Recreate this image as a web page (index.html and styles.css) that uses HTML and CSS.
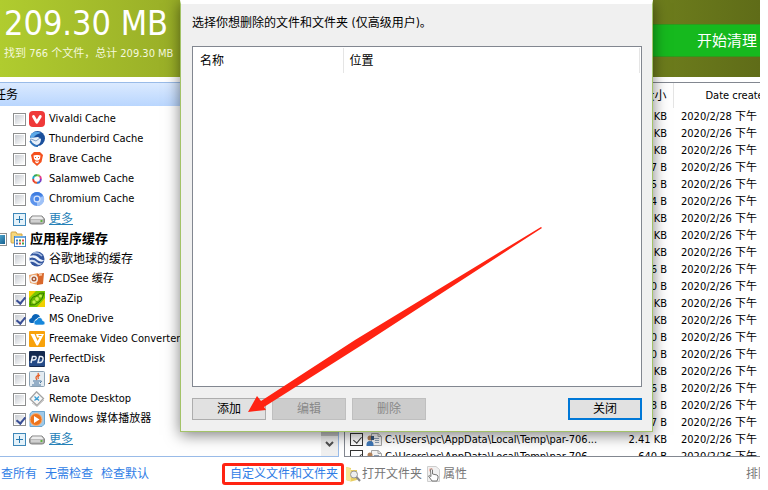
FILE: index.html
```
<!DOCTYPE html>
<html lang="zh-CN">
<head>
  <meta charset="UTF-8">
  <meta name="viewport" content="width=device-width, initial-scale=1.0">
  <title>磁盘清理</title>
  <link rel="stylesheet" href="styles.css">
</head>
<body>
  <div class="app">
    <header class="banner">
      <div>
        <h1>209.30 MB</h1>
        <p>找到 766 个文件，总计 209.30 MB</p>
      </div>
      <button type="button" class="clean-btn">开始清理</button>
    </header>

    <main class="panes">
      <section class="tasks">
        <h2>任务</h2>
        <div class="tasks-body">
          <ul class="tree">
            <li>
              <input type="checkbox" id="t1">
              <svg class="icon" viewBox="0 0 16 16"><rect width="16" height="16" rx="4" fill="#ef3939"/><path d="M4.500 5.500 L7.800 11.200 L11.300 5.500" fill="none" stroke="#fff" stroke-width="2.800" stroke-linecap="round" stroke-linejoin="round"/></svg>
              <label for="t1">Vivaldi Cache</label>
            </li>
            <li>
              <input type="checkbox" id="t2">
              <svg class="icon" viewBox="0 0 16 16"><circle cx="8.500" cy="7.500" r="7.500" fill="#1a4f9c"/><path d="M2 3 Q7 -1 12 2 Q7 3 5 6 L1 8 Z" fill="#5ba8e8"/><path d="M1 7 L9 6 L12 8 Q12 13 8 14 Q3 14 1 7" fill="#e9f1fa"/><path d="M2 8 L7 10 L11 7" fill="none" stroke="#7e9dc4"/><path d="M1 10 Q4 15 9 15.500" fill="none" stroke="#2d74bd" stroke-width="1.500"/></svg>
              <label for="t2">Thunderbird Cache</label>
            </li>
            <li>
              <input type="checkbox" id="t3">
              <svg class="icon" viewBox="0 0 16 16"><path d="M5 1 H11 L14 4 L12.500 11 L8 15 L3.500 11 L2 4 Z" fill="#f4511e"/><path d="M4.500 4.500 L7 4 H9 L11.500 4.500 L11 8 L9 9.500 L10 11 L8 12.500 L6 11 L7 9.500 L5 8 Z" fill="#fff"/><path d="M6 6 L7 7 M10 6 L9 7 M7 10 H9" stroke="#f4511e"/></svg>
              <label for="t3">Brave Cache</label>
            </li>
            <li>
              <input type="checkbox" id="t4">
              <svg class="icon" viewBox="0 0 16 16" fill="none" stroke-width="2"><path d="M5 5 L8 4" stroke="#36a852"/><path d="M8 4 L11 5" stroke="#8bc34a"/><path d="M11 5 L12 8" stroke="#e83e8c"/><path d="M12 8 L11 11" stroke="#7b3fc4"/><path d="M11 11 L8 12" stroke="#2979d8"/><path d="M8 12 L5 11" stroke="#ef5a28"/><path d="M5 11 L4 8" stroke="#e53935"/><path d="M4 8 L5 5" stroke="#22a7c9"/></svg>
              <label for="t4">Salamweb Cache</label>
            </li>
            <li>
              <input type="checkbox" id="t5">
              <svg class="icon" viewBox="0 0 16 16"><circle cx="8" cy="8" r="7" fill="#5b93ec"/><path d="M8 8 L14.500 5 A7 7 0 0 1 8 15 Z" fill="#9fc2f7"/><path d="M2 4.500 A7 7 0 0 1 14 4.500 H8 Z" fill="#3f7de0"/><circle cx="8" cy="8" r="3.500" fill="#d9e6fb"/><circle cx="8" cy="8" r="2.300" fill="#4a86e8"/></svg>
              <label for="t5">Chromium Cache</label>
            </li>
            <li class="more">
              <button type="button" aria-label="展开" class="expand"></button>
              <svg class="icon" viewBox="0 0 16 16"><path d="M3 5 H13 L15.500 8 V11 Q15.500 13 13 13 H3 Q0.500 13 0.500 11 V8 Z" fill="#a5a5a5" stroke="#858585"/><path d="M3.500 5.500 H12.500 L14.500 8 H1.500 Z" fill="#ececec"/><rect x="2" y="8.500" width="12" height="3" fill="#d0d0d0"/><rect x="11.500" y="9" width="2" height="2" fill="#5cb53c"/></svg>
              <a href="#">更多</a>
            </li>
            <li class="group">
              <input type="checkbox" id="g1" class="partial">
              <svg class="icon" viewBox="0 0 16 16"><path d="M1 2 Q1 1 2 1 H6 L7 3 H12 V12 H2 Q1 12 1 11 Z" fill="#f6d77c" stroke="#d2a544"/><rect x="4.500" y="5.500" width="11" height="10" fill="#fff" stroke="#4a86c8"/><rect x="5" y="5" width="10" height="2" fill="#6ba7e0"/><path d="M6 9.500 H8 M6 12.500 H8" stroke="#3e78c7" stroke-width="2"/><path d="M9 9.500 H11 M12 12.500 H14" stroke="#47a447" stroke-width="2"/><path d="M12 9.500 H14 M9 12.500 H11" stroke="#de5140" stroke-width="2"/></svg>
              <label for="g1">应用程序缓存</label>
            </li>
            <li class="zh">
              <input type="checkbox" id="t6">
              <svg class="icon" viewBox="0 0 16 16"><circle cx="8" cy="8" r="7.500" fill="#33569f"/><path d="M1 5 Q6 3 9 6 Q12 10 15.500 9 Q13 12 9 9.500 Q5 5.500 1 7 Z" fill="#f0f5fc"/><path d="M1 9 Q5 8 8 11 Q11 13.500 14 12 Q10 15.500 7 12.500 Q4 10 1 11 Z" fill="#d7e3f4"/><path d="M4 2 Q9 1 13 5" fill="none" stroke="#a9bfe3" stroke-width="1.500"/></svg>
              <label for="t6">谷歌地球的缓存</label>
            </li>
            <li>
              <input type="checkbox" id="t7">
              <svg class="icon" viewBox="0 0 16 16"><path d="M0 4 L9 2 V14 L1 12 Z" fill="#eda46b"/><path d="M8 3 L15 2 L14 13 L8 14 Z" fill="#d9682b"/><circle cx="5" cy="8" r="4" fill="#f5eee8"/><circle cx="5" cy="8" r="2.500" fill="#a75a37"/><circle cx="5" cy="8" r="1" fill="#fff"/><path d="M10 4 L13 3.500" stroke="#f8c49c" stroke-width="2"/></svg>
              <label for="t7">ACDSee 缓存</label>
            </li>
            <li>
              <input type="checkbox" id="t8" checked>
              <svg class="icon" viewBox="0 0 16 16"><rect width="16" height="16" fill="#79c800"/><path d="M0 0 H7 L0 7 Z M16 7 V16 H8 Z" fill="#f0d000"/><path d="M1 14 Q1 6 7 5 Q11 1 15 2 Q14 8 10 11 Q6 15 1 14" fill="#65b800" stroke="#387a00"/><circle cx="5" cy="11" r="1.700" fill="#c7ef51"/><circle cx="8" cy="8" r="1.900" fill="#c7ef51"/><circle cx="11.500" cy="5" r="1.500" fill="#c7ef51"/></svg>
              <label for="t8">PeaZip</label>
            </li>
            <li>
              <input type="checkbox" id="t9" checked>
              <svg class="icon" viewBox="0 0 16 16"><path d="M2 12 Q0 11.500 0 9.500 Q0 7.500 2.500 7 Q3.500 3 7 3 Q10 3 11 5.500 L6 9 V12 Z" fill="#0a64b8"/><path d="M7 14 Q4.500 13.500 5 11 Q5.500 9 7.500 9 Q8.500 6 11 6.500 Q13.500 7 13.500 9.500 Q16 10 16 12 Q16 14 14 14 Z" fill="#1687dc" stroke="#fff" stroke-width="0.600"/></svg>
              <label for="t9">MS OneDrive</label>
            </li>
            <li>
              <input type="checkbox" id="t10">
              <svg class="icon" viewBox="0 0 16 16"><rect width="16" height="16" rx="1" fill="#f8a20b"/><path d="M1.500 3 H5.500 L8.500 10 L10.500 6.500 H8 L7 3 H15 L9 14.500 H7.500 Z" fill="#fff"/><path d="M9.500 4.500 H12.500" stroke="#f8a20b"/></svg>
              <label for="t10">Freemake Video Converter</label>
            </li>
            <li>
              <input type="checkbox" id="t11">
              <svg class="icon" viewBox="0 0 16 16"><rect width="16" height="16" rx="1" fill="#14294f"/><path d="M0 10 Q8 6 16 9 V15 H0 Z" fill="#254b87"/><path d="M2 12 L3.500 5.500 H6 Q7.500 5.500 7 7.500 Q6.500 9 4.500 9 H3 M9 11.500 L10.500 5.500 H12 Q14.500 5.500 14 8.500 Q13.500 11.500 11 11.500 Z" fill="none" stroke="#e8eef7" stroke-width="1.500"/></svg>
              <label for="t11">PerfectDisk</label>
            </li>
            <li>
              <input type="checkbox" id="t12">
              <svg class="icon" viewBox="0 0 16 16"><rect x="0.500" y="0.500" width="15" height="15" rx="1" fill="#e3ebf1" stroke="#8ba1b3"/><path d="M9 2 Q10 4 8 5 Q6 6.500 8 9 M11 4 Q8 5.500 9.500 8" fill="none" stroke="#e7632d" stroke-width="1.300"/><path d="M4 10 H11 M5 12 H10 M3 14 H12 M11 10 Q14 9.500 11 12" fill="none" stroke="#46729c"/></svg>
              <label for="t12">Java</label>
            </li>
            <li>
              <input type="checkbox" id="t13">
              <svg class="icon" viewBox="0 0 16 16"><path d="M7.500 0.800 L14.500 7.500 L8 14.500 L1 8 Z" fill="#f7f7f7" stroke="#a3a3a3" stroke-width="1.300"/><path d="M3 12 L8 15.500 L15 9" fill="none" stroke="#c4c4c4"/><path d="M5.500 5.500 L7.500 7.500 L5.500 9.500 M10 5.500 L8 7.500 L10 9.500" fill="none" stroke="#3d9fd6" stroke-width="1.300"/></svg>
              <label for="t13">Remote Desktop</label>
            </li>
            <li>
              <input type="checkbox" id="t14" checked>
              <svg class="icon" viewBox="0 0 16 16"><path d="M3 0.500 H15.500 V13 L13 15.500 H1 V3 Z" fill="#9fc9e8" stroke="#6ba5cf"/><circle cx="7" cy="8.500" r="6" fill="#ee741c" stroke="#f9b27a"/><path d="M5 5 L10.500 8.500 L5 12 Z" fill="#fff"/></svg>
              <label for="t14">Windows 媒体播放器</label>
            </li>
            <li class="more">
              <button type="button" aria-label="展开" class="expand"></button>
              <svg class="icon" viewBox="0 0 16 16"><path d="M3 5 H13 L15.500 8 V11 Q15.500 13 13 13 H3 Q0.500 13 0.500 11 V8 Z" fill="#a5a5a5" stroke="#858585"/><path d="M3.500 5.500 H12.500 L14.500 8 H1.500 Z" fill="#ececec"/><rect x="2" y="8.500" width="12" height="3" fill="#d0d0d0"/><rect x="11.500" y="9" width="2" height="2" fill="#5cb53c"/></svg>
              <a href="#">更多</a>
            </li>
          </ul>
          <div class="scrollbar">
            <div class="thumb"></div>
            <button type="button" aria-label="向下滚动">
              <svg width="9" height="7" viewBox="0 0 9 7"><path d="M1 1 L4.500 4.500 L8 1" fill="none" stroke="#505050" stroke-width="2"/></svg>
            </button>
          </div>
        </div>
      </section>

      <section class="files">
        <table>
          <thead>
            <tr><th class="name"></th><th class="size">大小</th><th class="date">Date created</th></tr>
          </thead>
          <tbody>
            <tr><td></td><td>KB</td><td>2020/2/28 下午</td></tr>
            <tr><td></td><td>KB</td><td>2020/2/26 下午</td></tr>
            <tr><td></td><td>KB</td><td>2020/2/26 下午</td></tr>
            <tr><td></td><td>7 B</td><td>2020/2/26 下午</td></tr>
            <tr><td></td><td>5 B</td><td>2020/2/26 下午</td></tr>
            <tr><td></td><td>4 B</td><td>2020/2/26 下午</td></tr>
            <tr><td></td><td>KB</td><td>2020/2/26 下午</td></tr>
            <tr><td></td><td>KB</td><td>2020/2/26 下午</td></tr>
            <tr><td></td><td>KB</td><td>2020/2/26 下午</td></tr>
            <tr><td></td><td>6 B</td><td>2020/2/26 下午</td></tr>
            <tr><td></td><td>0 B</td><td>2020/2/26 下午</td></tr>
            <tr><td></td><td>KB</td><td>2020/2/26 下午</td></tr>
            <tr><td></td><td>KB</td><td>2020/2/26 下午</td></tr>
            <tr><td></td><td>0 B</td><td>2020/2/26 下午</td></tr>
            <tr><td></td><td>0 B</td><td>2020/2/26 下午</td></tr>
            <tr><td></td><td>KB</td><td>2020/2/26 下午</td></tr>
            <tr><td></td><td>6 B</td><td>2020/2/26 下午</td></tr>
            <tr><td></td><td>8 B</td><td>2020/2/26 下午</td></tr>
            <tr><td></td><td>7 B</td><td>2020/2/26 下午</td></tr>
            <tr>
              <td>
                <div class="file">
                  <input type="checkbox" id="f1" checked>
                  <svg class="icon" viewBox="0 0 16 16"><path d="M5.500 1.500 H12 L15.500 4.500 V13.500 H5.500 Z" fill="#f4f4f4" stroke="#a5a5a5"/><path d="M12 1.500 V4.500 H15" fill="none" stroke="#a5a5a5"/><path d="M8 6.500 H13 M9 8.500 H13 M9 10.500 H13" stroke="#8a9db3"/><circle cx="4" cy="6" r="2.500" fill="#b08058"/><path d="M0.500 14 Q0 9 4 9 Q8 9 7.500 14 Z" fill="#3f78b8"/><path d="M5 4 H8 V8 H5" fill="#35557c"/></svg>
                  <label for="f1">C:\Users\pc\AppData\Local\Temp\par-706...</label>
                </div>
              </td>
              <td>2.41 KB</td><td>2020/2/26 下午</td>
            </tr>
            <tr>
              <td>
                <div class="file">
                  <input type="checkbox" id="f2" checked>
                  <svg class="icon" viewBox="0 0 16 16"><path d="M5.500 1.500 H12 L15.500 4.500 V13.500 H5.500 Z" fill="#f4f4f4" stroke="#a5a5a5"/><path d="M12 1.500 V4.500 H15" fill="none" stroke="#a5a5a5"/><path d="M8 6.500 H13 M9 8.500 H13 M9 10.500 H13" stroke="#8a9db3"/><circle cx="4" cy="6" r="2.500" fill="#b08058"/><path d="M0.500 14 Q0 9 4 9 Q8 9 7.500 14 Z" fill="#3f78b8"/></svg>
                  <label for="f2">C:\Users\pc\AppData\Local\Temp\par-706...</label>
                </div>
              </td>
              <td>640 B</td><td>2020/2/26 下午</td>
            </tr>
          </tbody>
        </table>
      </section>
    </main>

    <footer class="actions">
      <nav class="task-links">
        <a href="#">查所有</a>
        <a href="#">无需检查</a>
        <a href="#">检查默认</a>
        <a href="#" class="custom">自定义文件和文件夹</a>
      </nav>
      <div class="file-links">
        <button type="button">
          <svg class="icon" viewBox="0 0 16 16"><path d="M1 1 L6 2 V4 H12 V14 L6 15.500 L1 14 Z" fill="#e9cf62"/><path d="M1 1 L6 3 V15.500 L1 14 Z" fill="#f5e594"/><circle cx="9" cy="8.500" r="3.500" fill="#eef0f0" stroke="#999"/><path d="M11.500 11 L15 15" stroke="#888" stroke-width="2"/></svg>
          打开文件夹
        </button>
        <button type="button">
          <svg class="icon" viewBox="0 0 16 16"><path d="M1.500 0.500 H10 L13.500 3.500 V15.500 H1.500 Z" fill="#f1f1f1" stroke="#cecece"/><circle cx="5" cy="4" r="2" fill="#efb3a5"/><path d="M4.500 3.500 Q5.500 2.500 6.500 4 V8 L11 9 Q12.500 9.500 12 12 L11 15 H6 L2.500 10 Q3.500 9 5 10.500 Z" fill="#fff" stroke="#777"/></svg>
          属性
        </button>
        <button type="button" class="exclude">排除</button>
      </div>
    </footer>

    <div class="dialog" role="dialog" aria-labelledby="dialogTitle">
      <p id="dialogTitle">选择你想删除的文件和文件夹 (仅高级用户)。</p>
      <div class="folder-list">
        <table>
          <thead>
            <tr><th class="folder-name">名称</th><th>位置</th></tr>
          </thead>
        </table>
      </div>
      <div class="dialog-buttons">
        <button type="button">添加</button>
        <button type="button" disabled>编辑</button>
        <button type="button" disabled>删除</button>
        <button type="button" class="close">关闭</button>
      </div>
    </div>

    <!-- pointer from the list to the add button -->
    <svg class="arrow" width="294" height="187" viewBox="0 0 294 187"><path d="M293 0 L294 1 L117 116 L16 180 L18 183 L0 185 L9 169 L13 174 L107 113 Z" fill="#ff2312"/></svg>
  </div>
</body>
</html>
```

FILE: styles.css
```
:root {
  --line: #99bbe8;
  --gray-line: #828790;
  --link: #2f7de6;
  --red: #ff2312;
}

* {
  margin: 0;
  padding: 0;
  box-sizing: border-box;
}

body {
  font-family: "DejaVu Sans Condensed", "Noto Sans CJK SC", sans-serif;
  font-size: 11px;
  line-height: 16px;
  color: #000;
  background-color: #fff;
}

button, input {
  font: inherit;
}

a {
  color: var(--link);
  text-decoration: none;
}

.app {
  position: relative;
  display: flex;
  flex-direction: column;
  height: 100vh;
  margin-right: 8px;
  overflow: hidden;
}

.icon {
  flex: none;
  width: 16px;
  height: 16px;
}

/* banner */
.banner {
  display: flex;
  justify-content: space-between;
  height: 77px;
  padding-left: 4px;
  color: #fff;
  background: linear-gradient(to right, #b0cc2f, #98ad27 24%, #6f7f1d 85%, #5f6c18);
}

.banner h1 {
  font-size: 34px;
  font-weight: normal;
  line-height: 46px;
}

.banner p {
  color: #f4f8dc;
}

.clean-btn {
  align-self: flex-start;
  width: 150px;
  height: 33px;
  margin-top: 24px;
  padding-right: 3px;
  border: 1px solid #2f9a1c;
  border-width: 1px 0;
  background-color: #16b91e;
  color: #fff;
  font-size: 15px;
  text-align: right;
}

/* panes */
.panes {
  display: flex;
  flex: 1;
  gap: 5px;
  min-height: 0;
  margin-top: 5px;
}

.tasks {
  display: flex;
  flex: none;
  flex-direction: column;
  width: 339px;
  border: 1px solid var(--line);
  border-left: 0;
}

.tasks h2 {
  height: 23px;
  font-size: 12px;
  font-weight: normal;
  line-height: 25px;
  text-indent: -6px;
  background: linear-gradient(#dbeaff, #b9d6fe);
}

.tasks-body {
  display: flex;
  flex: 1;
  min-height: 0;
}

.tree {
  flex: 1;
  padding: 3px 0 0 13px;
  list-style: none;
}

.tree li {
  display: flex;
  align-items: center;
  gap: 3px;
  height: 20px;
  white-space: nowrap;
}

.tree label, .tree a {
  padding-left: 1px;
}

.tree .zh, .tree a {
  font-size: 12px;
}

.tree a {
  color: #2782b8;
  text-decoration: underline;
}

.tree .group {
  margin-left: -19px;
  font-size: 13px;
  font-weight: bold;
}

input[type="checkbox"] {
  position: relative;
  flex: none;
  width: 13px;
  height: 13px;
  border: 1px solid #8e8f8f;
  background: linear-gradient(135deg, #c8ccd2, #fff) content-box, #fff;
  padding: 1px;
  appearance: none;
}

input[type="checkbox"]:checked::after {
  content: "";
  position: absolute;
  top: 1px;
  left: 4px;
  width: 4px;
  height: 7px;
  border: solid #3a4f96;
  border-width: 0 2px 2px 0;
  transform: rotate(40deg);
}

input[type="checkbox"].partial {
  background: linear-gradient(135deg, #5bb5dc, #17608f) content-box, #fff;
}

.expand {
  flex: none;
  width: 13px;
  height: 13px;
  border: 1px solid #3f87b8;
  background:
    linear-gradient(#2a7ab0, #2a7ab0) center / 7px 1px no-repeat,
    linear-gradient(#2a7ab0, #2a7ab0) center / 1px 7px no-repeat,
    #e4f2fa;
}

.scrollbar {
  display: flex;
  flex-direction: column;
  width: 17px;
  padding-bottom: 2px;
  background-color: #f0f0f0;
}

.scrollbar .thumb {
  flex: 1;
  background-color: #c2c2c2;
}

.scrollbar button {
  height: 18px;
  border: 0;
  background-color: #f0f0f0;
}

/* file list */
.files {
  flex: 1;
  min-width: 0;
  border: 1px solid var(--gray-line);
  border-right: 0;
  overflow: hidden;
}

table {
  width: 100%;
  border-collapse: collapse;
  table-layout: fixed;
}

th {
  font-weight: normal;
  text-align: left;
}

.files th, .files td {
  overflow: hidden;
  white-space: nowrap;
}

.files th {
  height: 25px;
}

.files td {
  height: 17px;
}

.files th.size {
  width: 70px;
  padding-right: 6px;
  border-right: 1px solid #e5e5e5;
  font-size: 12px;
  text-align: right;
}

.files th.date {
  width: 87px;
  padding-left: 32px;
}

.files td:nth-child(2) {
  padding-right: 6px;
  text-align: right;
}

.files td:nth-child(3) {
  padding-left: 8px;
}

.file {
  display: flex;
  align-items: center;
  gap: 3px;
  height: 17px;
  padding-left: 5px;
}

.file input[type="checkbox"] {
  border-color: #333;
  background: #fff;
}

.file input[type="checkbox"]:checked::after {
  border-color: #333;
  border-width: 0 1px 1px 0;
}

/* bottom links */
.actions {
  display: flex;
  gap: 1px;
  height: 33px;
  padding-top: 6px;
  font-size: 12px;
}

.task-links {
  display: flex;
  align-items: flex-start;
  flex: none;
  gap: 8px;
  width: 344px;
  padding-left: 1px;
}

.task-links a {
  line-height: 22px;
}

.task-links .custom {
  margin-left: auto;
  padding: 0 3px 0 5px;
  border: 3px solid var(--red);
  border-radius: 3px;
  line-height: 16px;
}

.file-links {
  display: flex;
  align-items: flex-start;
  flex: 1;
  gap: 4px;
  min-width: 0;
  overflow: hidden;
}

.file-links button {
  display: flex;
  align-items: center;
  flex: none;
  gap: 1px;
  height: 22px;
  border: 0;
  background: none;
  color: #777;
}

.file-links .exclude {
  width: 14px;
  margin-left: auto;
  overflow: hidden;
  white-space: nowrap;
}

/* custom folders dialog */
.dialog {
  position: absolute;
  top: 0;
  right: 107px;
  left: 180px;
  display: flex;
  flex-direction: column;
  height: 432px;
  padding: 11px 10px 11px 11px;
  border: 1px solid #a3c368;
  border-top: 4px solid #fff;
  background-color: #f0f0f0;
  box-shadow: 0 3px 14px rgba(0, 0, 0, 0.5);
  font-size: 12px;
}

.folder-list {
  flex: 1;
  margin-top: 15px;
  padding: 1px;
  border: 1px solid var(--gray-line);
  background-color: #fff;
}

.folder-list th {
  height: 25px;
  padding-left: 6px;
  border-right: 1px solid #e5e5e5;
}

.folder-list .folder-name {
  width: 149px;
}

.dialog-buttons {
  display: flex;
  gap: 6px;
  margin-top: 11px;
}

.dialog-buttons button {
  width: 74px;
  height: 22px;
  border: 1px solid #adadad;
  background-color: #e1e1e1;
  color: #000;
}

.dialog-buttons button:disabled {
  border-color: #bfbfbf;
  background-color: #ccc;
  color: #888;
}

.dialog-buttons .close {
  margin-left: auto;
  border: 2px solid #0078d7;
}

.arrow {
  position: absolute;
  top: 227px;
  left: 248px;
  pointer-events: none;
}
```
